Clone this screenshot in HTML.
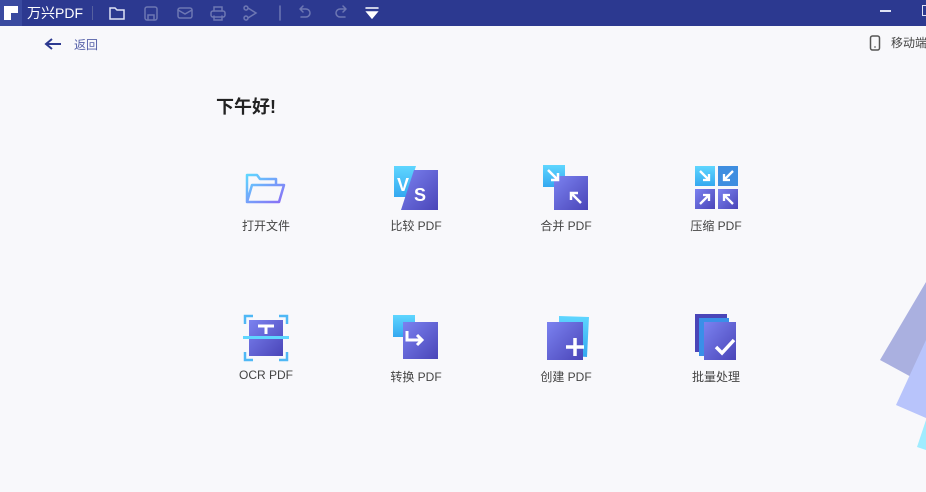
<!DOCTYPE html>
<html><head><meta charset="utf-8"><style>
body{margin:0;width:926px;height:492px;overflow:hidden;background:#f8f8fb;font-family:"Liberation Sans","Noto Sans CJK SC",sans-serif;position:relative}
.tb{position:absolute;left:0;top:0;width:926px;height:26px;background:#2c3990}
.t{position:absolute;color:#fff;font-size:14px}
.lbl{position:absolute;width:150px;text-align:center;font-size:12px;color:#444}
.ic{position:absolute}
</style></head><body>
<div class="tb">
<div style="position:absolute;left:0;top:0;width:22px;height:26px;background:#3a4aa0"></div>
<svg class="ic" style="left:4px;top:6px" width="14" height="14"><path d="M0 0H14V7H7V14H0Z" fill="#fff"/></svg>
<div class="t" style="left:27px;top:3px">万兴PDF</div>
<div style="position:absolute;left:92px;top:6px;width:1px;height:14px;background:#56619f"></div>
<svg class="ic" style="left:108px;top:4px" width="280" height="18" fill="none" stroke-width="1.5" stroke-linecap="round">
<path d="M2 4h5l2 2h7v9H2Z" stroke="#dfe3f5"/>
<g stroke="#6d77b3"><rect x="37" y="3" width="12" height="13" rx="2"/><path d="M40 16v-5h6v5"/>
<rect x="70" y="4" width="14" height="10" rx="2"/><path d="M70 6l7 4 7-4"/>
<rect x="103" y="7" width="14" height="6" rx="2"/><path d="M106 7V3h8v4M106 12v4h8v-4"/>
<path d="M140 4l8 5-8 5M140 4a2 2 0 1 0 0 .1M140 14a2 2 0 1 0 0 .1"/>
<path d="M172 2v14"/>
<path d="M192 5h6a4 4 0 0 1 0 8h-5M192 5l3-3M192 5l3 3"/>
<path d="M238 5h-6a4 4 0 0 0 0 8h5M238 5l-3-3M238 5l-3 3"/></g>
<path d="M258 4h12M259 8h10l-5 6z" stroke="#fff" fill="#fff"/>
</svg>
<div style="position:absolute;left:880px;top:10px;width:11px;height:1.5px;background:#dfe3f5"></div>
<div style="position:absolute;left:922px;top:5px;width:8px;height:9px;border:1.5px solid #dfe3f5"></div>
</div>
<svg class="ic" style="left:44px;top:37px" width="18" height="14"><path d="M17 7H3M8 2L2 7l6 5" stroke="#2c3990" stroke-width="2" fill="none"/></svg>
<div style="position:absolute;left:74px;top:36px;font-size:12px;color:#5560a8">返回</div>
<svg class="ic" style="left:869px;top:35px" width="12" height="16"><rect x="1.5" y="1" width="9" height="14" rx="2" stroke="#555" stroke-width="1.5" fill="none"/><path d="M5 12h2" stroke="#555"/></svg>
<div style="position:absolute;left:891px;top:34px;font-size:12px;color:#444;white-space:nowrap">移动端</div>
<div style="position:absolute;left:216px;top:93px;font-size:18px;font-weight:bold;color:#222">下午好!</div>

<svg width="0" height="0" style="position:absolute"><defs>
<linearGradient id="b" x1="0" y1="0" x2="0" y2="1"><stop offset="0" stop-color="#5fd6ff"/><stop offset="1" stop-color="#34a8f0"/></linearGradient>
<linearGradient id="p" x1="0" y1="0" x2="1" y2="1"><stop offset="0" stop-color="#7b82f0"/><stop offset="1" stop-color="#4a45b8"/></linearGradient>
<linearGradient id="f" x1="0" y1="0" x2="1" y2="1"><stop offset="0" stop-color="#5fd6ff"/><stop offset="1" stop-color="#8a6cf5"/></linearGradient>
</defs></svg>

<svg class="ic" style="left:245px;top:172px" width="42" height="34"><path d="M2 30V3h10l3 4h16v6M2 30l5-17h32l-5 17Z" fill="none" stroke="url(#f)" stroke-width="2.5" stroke-linejoin="round"/></svg>
<svg class="ic" style="left:393px;top:166px" width="46" height="44"><path d="M1 0h22l-10 31H1Z" fill="url(#b)"/><path d="M21 4h24v40H8Z" fill="url(#p)"/><text x="4" y="25" font-size="18" font-weight="bold" fill="#fff" font-family="Liberation Sans">V</text><text x="21" y="35" font-size="18" font-weight="bold" fill="#fff" font-family="Liberation Sans">S</text></svg>
<svg class="ic" style="left:543px;top:165px" width="46" height="45"><rect x="0" y="0" width="22" height="22" fill="url(#b)"/><rect x="11" y="11" width="34" height="34" fill="url(#p)"/><path d="M5 5l10 10M15 8v7H8M38 38L28 28M28 35v-7h7" stroke="#fff" stroke-width="2.5" fill="none"/></svg>
<svg class="ic" style="left:695px;top:166px" width="44" height="44"><rect x="0" y="0" width="20" height="20" fill="url(#b)"/><rect x="23" y="0" width="20" height="20" fill="#3f8ee0"/><rect x="0" y="23" width="20" height="20" fill="url(#p)"/><rect x="23" y="23" width="20" height="20" fill="url(#p)"/><path d="M5 5l9 9M14 8v6H8M38 5l-9 9M29 8v6h6M14 29l-9 9M8 29h6v6M29 29l9 9M35 29h-6v6" stroke="#fff" stroke-width="2.3" fill="none"/></svg>
<div class="lbl" style="left:191px;top:217px">打开文件</div>
<div class="lbl" style="left:341px;top:217px">比较 PDF</div>
<div class="lbl" style="left:491px;top:217px">合并 PDF</div>
<div class="lbl" style="left:641px;top:217px">压缩 PDF</div>
<svg class="ic" style="left:243px;top:314px" width="46" height="48"><path d="M2 10V2h8M36 2h8v8M2 38v8h8M44 38v8h-8" stroke="#4fb8f5" stroke-width="2.5" fill="none"/><rect x="6" y="6" width="34" height="36" fill="url(#p)"/><rect x="0" y="22" width="46" height="3" fill="#5fd6ff"/><path d="M15 12h16M23 12v8" stroke="#fff" stroke-width="3"/></svg>
<svg class="ic" style="left:393px;top:315px" width="46" height="44"><rect x="0" y="0" width="22" height="22" fill="url(#b)"/><rect x="10" y="7" width="35" height="37" fill="url(#p)"/><path d="M14 16v9h14M24 20l5 5-5 5" stroke="#fff" stroke-width="3" fill="none"/></svg>
<svg class="ic" style="left:545px;top:314px" width="46" height="48"><path d="M14 2l30 1-2 40-28-2Z" fill="url(#b)"/><rect x="2" y="8" width="36" height="38" fill="url(#p)"/><path d="M30 24v18M21 33h18" stroke="#fff" stroke-width="3.5"/></svg>
<svg class="ic" style="left:695px;top:314px" width="46" height="48"><rect x="0" y="0" width="32" height="38" fill="#4a45b8"/><rect x="4" y="4" width="30" height="38" fill="#3a8fe8"/><rect x="9" y="8" width="32" height="38" fill="url(#p)"/><path d="M21 33l6 6 12-13" stroke="#fff" stroke-width="3.5" fill="none"/></svg>
<div class="lbl" style="left:191px;top:368px">OCR PDF</div>
<div class="lbl" style="left:341px;top:368px">转换 PDF</div>
<div class="lbl" style="left:491px;top:368px">创建 PDF</div>
<div class="lbl" style="left:641px;top:368px">批量处理</div>

<svg class="ic" style="left:0;top:0" width="926" height="492"><polygon points="880,360 926,282 926,385" fill="#aab0e0"/><polygon points="896,405 926,340 926,418" fill="#b8c4fb"/><polygon points="917,447 926,420 926,450" fill="#a0ecff"/></svg>
</body></html>
